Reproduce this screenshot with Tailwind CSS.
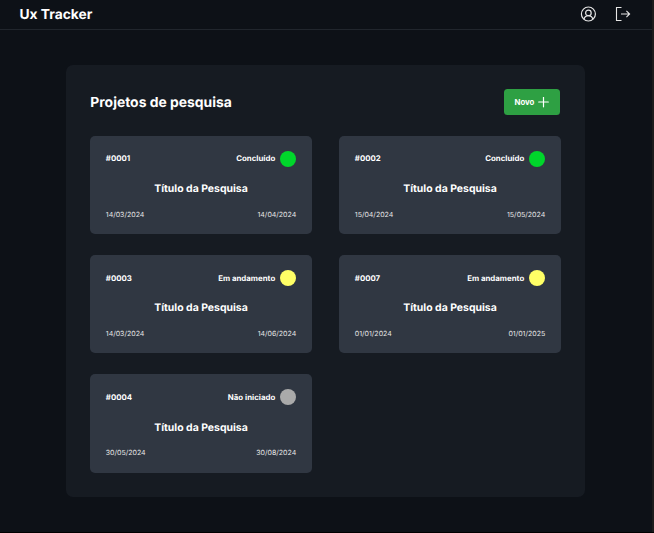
<!DOCTYPE html>
<html lang="pt-BR">
<head>
<meta charset="utf-8">
<title>Ux Tracker</title>
<script src="https://cdn.jsdelivr.net/npm/@tailwindcss/browser@4"></script>
</head>
<body class="h-[533px] overflow-hidden bg-[#1c1c1c] font-['Inter',sans-serif] text-white [text-rendering:geometricPrecision]">
<div class="h-[532px] w-[652px] bg-[#0d1117]">
  <header class="flex h-[30px] items-center justify-between border-b border-[#21262d] pr-[21px] pl-[19.5px]">
    <h1 class="pt-px text-[13.8px] leading-[17px] font-bold">Ux Tracker</h1>
    <nav class="flex items-center gap-[19px] pb-px">
      <svg class="size-4" viewBox="0 0 16 16" fill="none" stroke="#e6e6e6" stroke-width="1.2"><circle cx="8.4" cy="8" r="7"/><circle cx="8.4" cy="6.9" r="2.8"/><path d="M3.9 13.3C4.6 11 6.3 9.7 8.4 9.7s3.8 1.3 4.5 3.6"/></svg>
      <svg class="size-4" viewBox="0 0 16 16" fill="none" stroke="#e6e6e6" stroke-width="1.1"><path d="M6.5 1.5H1.5v13h5M6 8h8.7M11.4 4.9 14.6 8l-3.2 3.1"/></svg>
    </nav>
  </header>
  <main class="mt-[35px] ml-[66px] h-[432px] w-[519px] rounded-[7px] bg-[#161b22] px-[24.3px] pt-[24px]">
    <div class="flex h-[26px] items-center justify-between">
      <h2 class="pt-[2px] text-[13.9px] leading-[17px] font-bold">Projetos de pesquisa</h2>
      <button class="mr-[.3px] flex h-[26px] w-[56px] items-center justify-center gap-[4px] rounded-[3.5px] bg-[#2ea043] pr-[1px] text-[7.8px] font-bold"><span class="pt-px">Novo</span>
        <svg class="size-[11px]" viewBox="0 0 11 11" stroke="#fff" stroke-width="1.2" stroke-linecap="round"><path d="M5.5 .2v9.6M.7 5h9.6"/></svg>
      </button>
    </div>
    <div id="projects" class="mt-[20.6px] grid grid-cols-2 gap-x-[27.6px] gap-y-[20.7px]"></div>
  </main>
</div>
<div class="h-px bg-black"></div>
<script>
const projects = [
  ['#0001', 'Concluído', 'bg-[#00d62b]', '14/03/2024', '14/04/2024'],
  ['#0002', 'Concluído', 'bg-[#00d62b]', '15/04/2024', '15/05/2024'],
  ['#0003', 'Em andamento', 'bg-[#ffff66]', '14/03/2024', '14/06/2024'],
  ['#0007', 'Em andamento', 'bg-[#ffff66]', '01/01/2024', '01/01/2025'],
  ['#0004', 'Não iniciado', 'bg-[#aaaaaa]', '30/05/2024', '30/08/2024'],
];
document.getElementById('projects').innerHTML = projects.map(([id, status, color, start, end]) => `
  <article class="flex h-[98.6px] flex-col rounded-[5px] bg-[#303742] px-[15.5px] pt-[15px]">
    <div class="flex h-4 items-center justify-between text-[7.85px] font-bold">
      <span class="pt-[1.5px]">${id}</span>
      <span class="flex items-center gap-[5px]"><span class="pt-[1.5px]">${status}</span><i class="size-4 rounded-full ${color}"></i></span>
    </div>
    <h3 class="mt-[15.6px] text-center text-[10.45px] leading-[14px] font-bold">Título da Pesquisa</h3>
    <div class="mt-[13.7px] flex justify-between text-[7px] leading-[10px] text-[#e6e6e6]"><span>${start}</span><span>${end}</span></div>
  </article>`).join('');
</script>
</body>
</html>
